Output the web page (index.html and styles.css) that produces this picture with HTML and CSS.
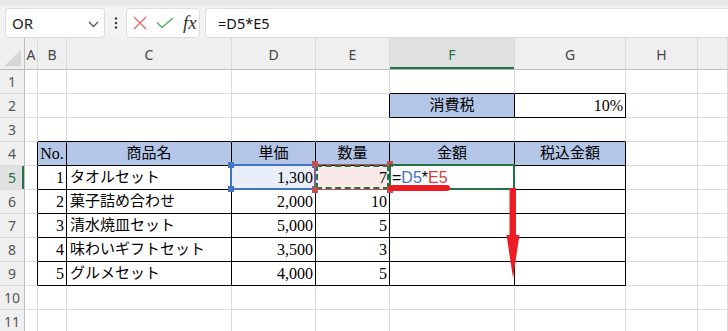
FILE: index.html
```html
<!DOCTYPE html>
<html lang="ja">
<head>
    <meta charset="UTF-8">
    <title>Book1 - Excel</title>
    <link rel="stylesheet" href="styles.css">
</head>
<body>
<div class="bar">
    <div class="namebox">
        <span>OR</span>
        <svg class="chev" width="11" height="7" viewBox="0 0 11 7"><path d="M1 1L5.5 5.5L10 1" fill="none" stroke="#555" stroke-width="1.3"/></svg>
    </div>
    <svg class="grip" width="21" height="30" viewBox="0 0 21 30">
        <circle cx="11" cy="10.5" r="1.3" fill="#444"/>
        <circle cx="11" cy="15" r="1.3" fill="#444"/>
        <circle cx="11" cy="19.5" r="1.3" fill="#444"/>
    </svg>
    <div class="fxbox">
        <svg class="cancel" width="14" height="14" viewBox="0 0 14 14"><path d="M1 1L13 13M13 1L1 13" stroke="#e46c6c" stroke-width="1.4"/></svg>
        <svg class="enter" width="18" height="12" viewBox="0 0 18 12"><path d="M1 5.5L6 10.5L17 1" fill="none" stroke="#5aad67" stroke-width="1.5"/></svg>
        <span class="fx">fx</span>
    </div>
    <div class="formula">=D5*E5</div>
</div>

<div class="sheet">
    <div class="row head">
        <div class="corner"></div>
        <div>A</div><div>B</div><div>C</div><div>D</div><div>E</div>
        <div class="on">F</div><div>G</div><div>H</div><div></div>
    </div>
    <div class="row">
        <div class="rh">1</div>
        <div></div><div></div><div></div><div></div><div></div>
        <div class="tb"></div><div class="tb"></div><div></div><div></div>
    </div>
    <div class="row">
        <div class="rh">2</div>
        <div></div><div></div><div></div><div></div><div class="tr"></div>
        <div class="t hd">消費税</div><div class="t num">10%</div><div></div><div></div>
    </div>
    <div class="row">
        <div class="rh">3</div>
        <div></div><div class="tb"></div><div class="tb"></div><div class="tb"></div><div class="tb"></div>
        <div class="tb"></div><div class="tb"></div><div></div><div></div>
    </div>
    <div class="row">
        <div class="rh">4</div>
        <div class="tr"></div><div class="t hd lat">No.</div><div class="t hd">商品名</div><div class="t hd">単価</div><div class="t hd">数量</div>
        <div class="t hd">金額</div><div class="t hd">税込金額</div><div></div><div></div>
    </div>
    <div class="row">
        <div class="rh on">5</div>
        <div class="tr"></div><div class="t num">1</div><div class="t txt">タオルセット</div><div class="t num ref-d">1,300</div><div class="t num ref-e">7</div>
        <div class="t txt edit">=<span class="blue">D5</span>*<span class="red">E5</span></div><div class="t"></div><div></div><div></div>
    </div>
    <div class="row">
        <div class="rh">6</div>
        <div class="tr"></div><div class="t num">2</div><div class="t txt">菓子詰め合わせ</div><div class="t num">2,000</div><div class="t num">10</div>
        <div class="t"></div><div class="t"></div><div></div><div></div>
    </div>
    <div class="row">
        <div class="rh">7</div>
        <div class="tr"></div><div class="t num">3</div><div class="t txt">清水焼皿セット</div><div class="t num">5,000</div><div class="t num">5</div>
        <div class="t"></div><div class="t"></div><div></div><div></div>
    </div>
    <div class="row">
        <div class="rh">8</div>
        <div class="tr"></div><div class="t num">4</div><div class="t txt">味わいギフトセット</div><div class="t num">3,500</div><div class="t num">3</div>
        <div class="t"></div><div class="t"></div><div></div><div></div>
    </div>
    <div class="row">
        <div class="rh">9</div>
        <div class="tr"></div><div class="t num">5</div><div class="t txt">グルメセット</div><div class="t num">4,000</div><div class="t num">5</div>
        <div class="t"></div><div class="t"></div><div></div><div></div>
    </div>
    <div class="row">
        <div class="rh">10</div>
        <div></div><div></div><div></div><div></div><div></div><div></div><div></div><div></div><div></div>
    </div>
    <div class="row">
        <div class="rh">11</div>
        <div></div><div></div><div></div><div></div><div></div><div></div><div></div><div></div><div></div>
    </div>

    <!-- range highlights while editing F5 -->
    <div class="sel sel-d">
        <span class="h h-tl"></span><span class="h h-tr"></span><span class="h h-bl"></span><span class="h h-br"></span>
    </div>
    <div class="sel sel-e">
        <span class="h h-tl"></span><span class="h h-tr"></span><span class="h h-bl"></span><span class="h h-br"></span>
    </div>
    <div class="sel sel-f"></div>

    <!-- hand drawn marks -->
    <div class="mark-line"></div>
    <svg class="mark-arrow" width="18" height="94" viewBox="0 0 18 94">
        <path d="M5.5 1H12V48H15.5L9 91L2.5 48H5.5Z" fill="#ed1c24"/>
    </svg>
</div>
</body>
</html>
```
FILE: styles.css
```css
body {
    margin: 0;
    width: 728px;
    height: 331px;
    overflow: hidden;
    background-color: #fff;
    font-family: "Noto Sans", Arial, sans-serif;
}

/* formula bar */
.bar {
    display: flex;
    align-items: flex-start;
    height: 38px;
    box-sizing: border-box;
    border-top: 6px solid #e9e9e9;
    padding-top: 2px;
    background-color: #f3f3f3;
}

.namebox,
.fxbox,
.formula {
    height: 30px;
    box-sizing: border-box;
    background-color: #fff;
    border: 1px solid #dcdcdc;
    border-radius: 4px;
    display: flex;
    align-items: center;
}

.namebox {
    width: 100px;
    margin-left: 5px;
    padding: 0 5px 0 6px;
    justify-content: space-between;
    font-size: 15px;
    color: #222;
}

.chev {
    margin-top: 2px;
}

.fxbox {
    width: 74px;
    padding-left: 6px;
}

.enter {
    margin-left: 9px;
}

.fx {
    margin-left: 9px;
    font-family: "Liberation Serif", serif;
    font-style: italic;
    font-size: 19px;
    color: #333;
}

.formula {
    flex: 1;
    margin-left: 5px;
    margin-right: -6px;
    padding-left: 12px;
    font-size: 14.5px;
    color: #111;
}

/* sheet grid */
.sheet {
    position: relative;
}

.row {
    display: grid;
    grid-template-columns: 25px 13px 29px 165px 84px 74px 125px 111px 72px 1fr;
    height: 24px;
}

.row > div {
    box-sizing: border-box;
    border-right: 1px solid #dadada;
    border-bottom: 1px solid #dadada;
    line-height: 23px;
    white-space: nowrap;
    overflow: hidden;
    font-family: "Liberation Serif", "Noto Sans CJK JP", serif;
    font-size: 15px;
    color: #000;
}

.row.head {
    height: 32px;
}

.row.head > div {
    background-color: #efefef;
    border-bottom-color: #bcbcbc;
    font-family: "Noto Sans", Arial, sans-serif;
    font-size: 14px;
    line-height: 33px;
    text-align: center;
    color: #444;
}

.row.head > .corner {
    border-right-color: #bcbcbc;
    background: #efefef linear-gradient(135deg, transparent 50%, #d6d6d6 50%) no-repeat right 3px bottom 3px / 17px 17px;
}

.row.head > .on {
    background-color: #e0e0e0;
    color: #217346;
    box-shadow: inset 0 -2px #217346;
}

.row > .rh {
    background-color: #efefef;
    border-right-color: #bcbcbc;
    font-family: "Noto Sans", Arial, sans-serif;
    font-size: 14px;
    text-align: center;
    color: #555;
}

.row > .rh.on {
    background-color: #e0e0e0;
    color: #217346;
    box-shadow: inset -2px 0 #217346;
}

/* table borders */
.row > .t {
    border-right-color: #000;
    border-bottom-color: #000;
}

.row > .tr {
    border-right-color: #000;
}

.row > .tb {
    border-bottom-color: #000;
}

.hd {
    background-color: #b4c6e7;
    text-align: center;
}

.row > .num,
.row > .lat {
    font-size: 16px;
}

.num {
    text-align: right;
    padding-right: 2px;
}

.txt {
    padding-left: 3px;
}

.row > .ref-d {
    background-color: #e9eef8;
}

.row > .ref-e {
    background-color: #f9e9e8;
}

.row > .edit {
    font-family: "Liberation Sans", Arial, sans-serif;
    font-size: 16px;
    padding-left: 2px;
}

.blue {
    color: #4472c4;
}

.red {
    color: #d83b3b;
}

/* selection overlays */
.sel {
    position: absolute;
    top: 126px;
    height: 26px;
    box-sizing: border-box;
}

.sel-d {
    left: 230px;
    width: 86px;
    border: 2px solid #4472c4;
}

.sel-e {
    left: 315px;
    width: 75px;
    border: 1px solid #c0504d;
}

.sel-e::before {
    content: "";
    position: absolute;
    inset: 0;
    border: 2px dashed #217346;
}

.sel-f {
    left: 389px;
    width: 126px;
    border: 2px solid #217346;
}

.h {
    position: absolute;
    width: 6px;
    height: 6px;
    background-color: #4472c4;
}

.sel-e .h {
    background-color: #c0504d;
}

.h-tl { left: -4px; top: -4px; }
.h-tr { right: -4px; top: -4px; }
.h-bl { left: -4px; bottom: -4px; }
.h-br { right: -4px; bottom: -4px; }

.mark-line {
    position: absolute;
    left: 388px;
    top: 147px;
    width: 62px;
    height: 6px;
    border-radius: 3px;
    background-color: #ed1c24;
}

.mark-arrow {
    position: absolute;
    left: 504px;
    top: 149px;
}
```
